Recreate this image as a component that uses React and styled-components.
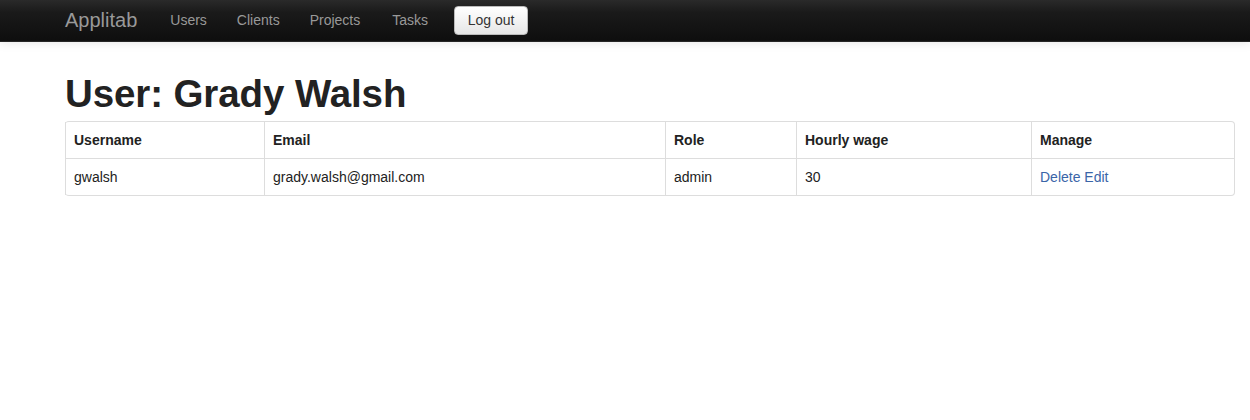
import React from "react";
import styled, { createGlobalStyle } from "styled-components";

const Global = createGlobalStyle`
  html, body { margin: 0; padding: 0; background: #fff; }
  body {
    font-family: "Liberation Sans", Arial, Helvetica, sans-serif;
    font-size: 14px;
    line-height: 20px;
    color: #333;
  }
`;

const Navbar = styled.div`
  height: 42px;
  background: linear-gradient(to bottom, #2a2a2a 0%, #1a1a1a 30%, #0e0e0e 100%);
  border-bottom: 1px solid #252525;
  box-shadow: 0 1px 10px rgba(0, 0, 0, 0.1);
  display: flex;
  align-items: center;
  padding-left: 65px;
  padding-bottom: 1px;
  box-sizing: border-box;
`;

const Brand = styled.a`
  font-size: 20px;
  color: #999;
  font-weight: 200;
  text-decoration: none;
  margin-right: 33px;
  line-height: 20px;
`;

const NavLink = styled.a`
  color: #999;
  font-size: 14px;
  text-decoration: none;
  margin-right: ${(p) => p.$gap}px;
`;

const Button = styled.button`
  font-family: inherit;
  font-size: 14px;
  color: #333;
  height: 29px;
  width: 74px;
  padding: 0;
  border-radius: 4px;
  border: 1px solid #bbb;
  background: linear-gradient(to bottom, #ffffff, #e6e6e6);
  box-shadow: inset 0 1px 0 rgba(255, 255, 255, 0.2);
`;

const Container = styled.div`
  padding: 0 16px 0 65px;
`;

const Title = styled.h1`
  font-size: 38.5px;
  line-height: 40px;
  font-weight: bold;
  color: #222;
  margin: 32px 0 7px 0;
  letter-spacing: -0.1px;
`;

const Table = styled.table`
  width: 100%;
  border-collapse: separate;
  border-spacing: 0;
  table-layout: fixed;
  border: 1px solid #ddd;
  border-left: 0;
  border-radius: 4px;
`;

const Th = styled.th`
  text-align: left;
  font-weight: bold;
  padding: 8px;
  border-left: 1px solid #ddd;
  color: #222;
  line-height: 20px;
`;

const Td = styled.td`
  padding: 8px;
  border-left: 1px solid #ddd;
  border-top: 1px solid #ddd;
  color: #222;
  line-height: 20px;
`;

const Link = styled.a`
  color: #3a65a8;
  text-decoration: none;
`;

const cols = [199, 401, 131, 235, 203];

export default function App() {
  return (
    <>
      <Global />
      <Navbar>
        <Brand href="#">Applitab</Brand>
        <NavLink href="#" $gap={30}>Users</NavLink>
        <NavLink href="#" $gap={30}>Clients</NavLink>
        <NavLink href="#" $gap={32}>Projects</NavLink>
        <NavLink href="#" $gap={26}>Tasks</NavLink>
        <Button>Log out</Button>
      </Navbar>
      <Container>
        <Title>User: Grady Walsh</Title>
        <Table>
          <colgroup>
            {cols.map((w, i) => (
              <col key={i} style={{ width: w }} />
            ))}
          </colgroup>
          <thead>
            <tr>
              <Th>Username</Th>
              <Th>Email</Th>
              <Th>Role</Th>
              <Th>Hourly wage</Th>
              <Th>Manage</Th>
            </tr>
          </thead>
          <tbody>
            <tr>
              <Td>gwalsh</Td>
              <Td>grady.walsh@gmail.com</Td>
              <Td>admin</Td>
              <Td>30</Td>
              <Td>
                <Link href="#">Delete</Link> <Link href="#">Edit</Link>
              </Td>
            </tr>
          </tbody>
        </Table>
      </Container>
    </>
  );
}
